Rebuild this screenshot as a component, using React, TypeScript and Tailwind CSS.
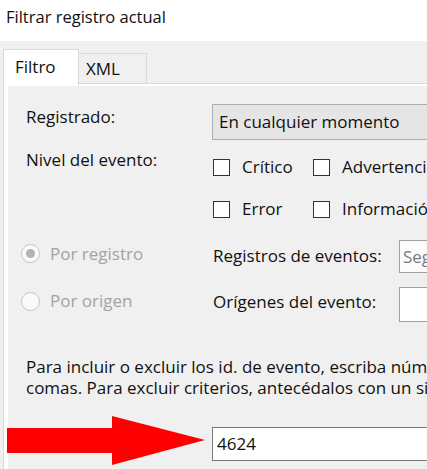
import React from "react";

const FONT = "font-['Segoe_UI','Open_Sans','Noto_Sans',sans-serif]";

function Checkbox({ label, width }: { label: string; width: string }) {
  return (
    <div className={`flex items-center h-[22px] shrink-0 ${width}`}>
      <span className="w-[17px] h-[17px] border border-[#333333] bg-white shrink-0" />
      <span className="ml-[12px] whitespace-nowrap">{label}</span>
    </div>
  );
}

function Radio({ label, checked }: { label: string; checked?: boolean }) {
  return (
    <div className="flex items-center text-[#a3a3a3]">
      <span className="w-[19px] h-[19px] rounded-full border border-[#c4c4c4] bg-[#fafafa] flex items-center justify-center shrink-0">
        {checked ? <span className="w-[9px] h-[9px] rounded-full bg-[#b3b3b3]" /> : null}
      </span>
      <span className="ml-[10px] whitespace-nowrap">{label}</span>
    </div>
  );
}

export default function App() {
  return (
    <div className={`relative w-[427px] h-[469px] overflow-hidden bg-white text-[17px] text-[#111] ${FONT}`}>
      <div className="h-[41px] pl-[6px] pt-[6px] leading-[22px] text-[16.5px]">Filtrar registro actual</div>

      <div className="bg-[#f0f0f0] h-[428px]">
        {/* tab strip */}
        <div className="h-[42px] pl-[3px] flex items-end">
          <div className="relative z-10 -mb-[2px] w-[76px] h-[36px] shrink-0 bg-white border border-b-0 border-[#d9d9d9] pl-[11px] pt-[6px] leading-[22px]">
            Filtro
          </div>
          <div className="w-[68px] h-[30px] shrink-0 bg-[#f0f0f0] border border-l-0 border-b-0 border-[#d9d9d9] pl-[7px] pt-[4px] leading-[22px]">
            XML
          </div>
        </div>

        {/* tab page */}
        <div className="ml-[3px] border-l border-t border-[#d9d9d9] bg-white pl-[4px] pt-[2px] h-[386px]">
          <div className="bg-[#f0f0f0] h-full pt-[18px]">
            <div className="flex items-start h-[36px]">
              <div className="w-[204px] shrink-0 pl-[18px] mt-[2px] leading-[22px]">Registrado:</div>
              <div className="w-[260px] h-[36px] shrink-0 bg-[#e5e5e5] border border-[#adadad] pl-[6px] flex items-center leading-[22px] whitespace-nowrap">
                En cualquier momento
              </div>
            </div>

            <div className="flex items-start mt-[9px]">
              <div className="w-[204px] shrink-0 pl-[18px] leading-[22px] whitespace-nowrap">Nivel del evento:</div>
              <div className="pl-[1px] shrink-0">
                <div className="flex mt-[7px]">
                  <Checkbox label="Crítico" width="w-[100px]" />
                  <Checkbox label="Advertencia" width="w-[140px]" />
                </div>
                <div className="flex mt-[20px]">
                  <Checkbox label="Error" width="w-[100px]" />
                  <Checkbox label="Información" width="w-[140px]" />
                </div>
              </div>
            </div>

            <div className="flex items-center h-[33px] mt-[20px]">
              <div className="w-[204px] shrink-0 pl-[13px] mb-[6px]">
                <Radio label="Por registro" checked />
              </div>
              <div className="w-[187px] shrink-0 pl-[1px] mb-[2px] whitespace-nowrap">Registros de eventos:</div>
              <div className="w-[100px] h-[33px] shrink-0 border border-[#a0a0a0] bg-[#fbfbfb] pl-[3px] flex items-center text-[#7a7a7a]">
                Seguridad
              </div>
            </div>

            <div className="flex items-center h-[35px] mt-[14px]">
              <div className="w-[204px] shrink-0 pl-[13px] mb-[7px]">
                <Radio label="Por origen" />
              </div>
              <div className="w-[187px] shrink-0 pl-[1px] mb-[6px] whitespace-nowrap">Orígenes del evento:</div>
              <div className="w-[100px] h-[35px] shrink-0 border border-[#a0a0a0] bg-white" />
            </div>

            <div className="pl-[18px] mt-[34px] leading-[21px] whitespace-nowrap">
              <div>Para incluir o excluir los id. de evento, escriba números de id. o intervalos de id. separados por</div>
              <div>comas. Para excluir criterios, antecédalos con un signo menos. Por ejemplo, 1,3,5-99,-76</div>
            </div>

            <div className="flex mt-[29px]">
              <div className="w-[204px] shrink-0" />
              <div className="w-[260px] h-[34px] shrink-0 border border-[#7a7a7a] bg-white pl-[4px] flex items-center">
                4624
              </div>
            </div>
          </div>
        </div>
      </div>

      {/* red annotation arrow */}
      <svg className="absolute left-[7px] top-[416px]" width="199" height="49" viewBox="0 0 199 49">
        <polygon points="0,12 105,12 105,0 198,24 105,49 105,37 0,37" fill="#ff0000" />
      </svg>
    </div>
  );
}
